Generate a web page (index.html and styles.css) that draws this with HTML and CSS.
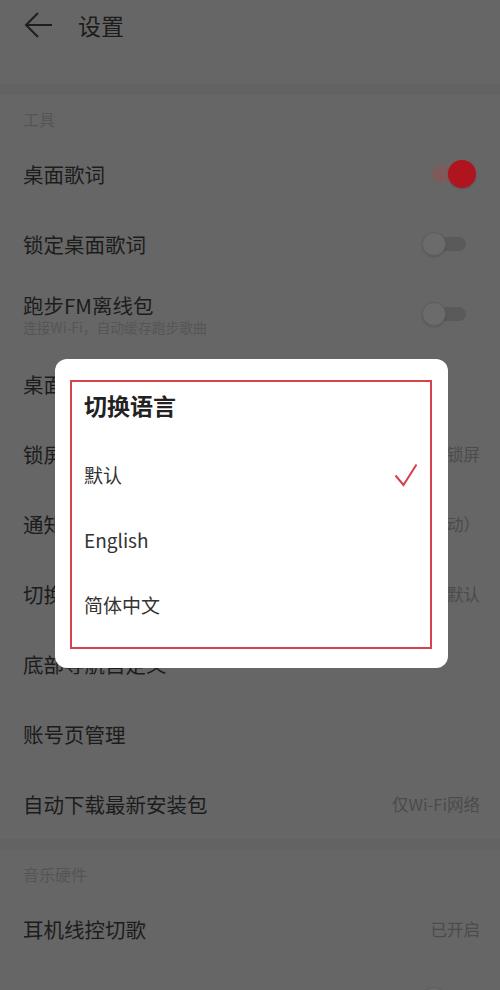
FILE: index.html
```html
<!DOCTYPE html>
<html lang="zh-CN">
<head>
    <meta charset="UTF-8">
    <meta name="viewport" content="width=device-width, initial-scale=1.0">
    <title>设置</title>
    <link rel="stylesheet" href="styles.css">
</head>
<body>
    <div class="page">
        <header class="topbar">
            <svg class="back" width="30" height="26" viewBox="0 0 30 26">
                <path d="M28 13H2M14 1L2 13l12 12" fill="none" stroke="#1e1e1e" stroke-width="2"/>
            </svg>
            <h1>设置</h1>
        </header>

        <div class="band"></div>

        <section>
            <h2 class="section-title">工具</h2>
            <div class="row">
                <span class="label">桌面歌词</span>
                <span class="switch on"><i></i></span>
            </div>
            <div class="row">
                <span class="label">锁定桌面歌词</span>
                <span class="switch"><i></i></span>
            </div>
            <div class="row">
                <div class="label-group">
                    <span class="label">跑步FM离线包</span>
                    <span class="sub">连接Wi-Fi，自动缓存跑步歌曲</span>
                </div>
                <span class="switch"><i></i></span>
            </div>
            <div class="row">
                <span class="label">桌面小部件</span>
            </div>
            <div class="row">
                <span class="label">锁屏显示</span>
                <span class="value">系统锁屏</span>
            </div>
            <div class="row">
                <span class="label">通知栏样式</span>
                <span class="value">系统样式（自动）</span>
            </div>
            <div class="row">
                <span class="label">切换语言</span>
                <span class="value">默认</span>
            </div>
            <div class="row">
                <span class="label">底部导航自定义</span>
            </div>
            <div class="row">
                <span class="label">账号页管理</span>
            </div>
            <div class="row">
                <span class="label">自动下载最新安装包</span>
                <span class="value">仅Wi-Fi网络</span>
            </div>
        </section>

        <div class="band"></div>

        <section>
            <h2 class="section-title">音乐硬件</h2>
            <div class="row">
                <span class="label">耳机线控切歌</span>
                <span class="value">已开启</span>
            </div>
            <div class="row">
                <span class="label">蓝牙设备自动播放</span>
                <span class="switch"><i></i></span>
            </div>
        </section>

        <!-- language dialog -->
        <div class="dialog">
            <div class="dialog-box">
                <h3>切换语言</h3>
                <ul class="options">
                    <li>
                        <span>默认</span>
                        <svg width="24" height="24" viewBox="0 0 24 24">
                            <path d="M1.5 12.5L9.5 22 22.5 1.5" fill="none" stroke="#d4404c" stroke-width="2"/>
                        </svg>
                    </li>
                    <li><span>English</span></li>
                    <li><span>简体中文</span></li>
                </ul>
            </div>
        </div>
    </div>
</body>
</html>
```

FILE: styles.css
```css
body {
    margin: 0;
    background: #666666;
    font-family: "Noto Sans CJK SC", "Noto Sans", sans-serif;
    color: #1c1c1c;
}
.page {
    position: relative;
    width: 500px;
    height: 990px;
    overflow: hidden;
}
.topbar {
    display: flex;
    align-items: center;
    gap: 24px;
    height: 84px;
    box-sizing: border-box;
    padding: 8px 0 42px 24px;
}
.back {
    display: block;
}
.topbar h1 {
    margin: 0;
    font-size: 23px;
    font-weight: 400;
    line-height: 34px;
}
.band {
    height: 11px;
    background: #636363;
}
.section-title {
    margin: 0;
    padding: 13px 23px 9px;
    font-size: 16px;
    font-weight: 400;
    line-height: 22px;
    color: #555555;
}
.row {
    display: flex;
    align-items: center;
    justify-content: space-between;
    height: 70px;
    padding: 0 20px 0 23px;
}
.label {
    font-size: 20.5px;
    line-height: 26px;
}
.label-group {
    display: flex;
    flex-direction: column;
}
.sub {
    font-size: 13.8px;
    line-height: 19px;
    color: #555555;
}
.value {
    font-size: 16.5px;
    color: #4b4b4b;
}
.switch {
    position: relative;
    width: 44px;
    height: 28px;
    margin-right: 14px;
}
.switch::before {
    content: "";
    position: absolute;
    left: 8px;
    right: 0;
    top: 7px;
    height: 14px;
    border-radius: 7px;
    background: #5a5a5a;
}
.switch i {
    position: absolute;
    left: 0;
    top: 2px;
    width: 24px;
    height: 24px;
    box-sizing: border-box;
    border-radius: 50%;
    border: 1px solid #5f5f5f;
    background: #6b6b6b;
    box-shadow: 0 1px 2px rgba(0,0,0,0.15);
}
.switch.on {
    margin-right: 4px;
}
.switch.on::before {
    left: 0;
    right: 8px;
    top: 6px;
    height: 16px;
    border-radius: 8px;
    background: #7e5b5b;
}
.switch.on i {
    left: auto;
    right: 0;
    top: 0;
    width: 28px;
    height: 28px;
    border: none;
    background: #b0141e;
}
.dialog {
    position: absolute;
    left: 55px;
    top: 359px;
    width: 393px;
    height: 309px;
    box-sizing: border-box;
    padding: 21px 16px 19px 15px;
    background: #ffffff;
    border-radius: 12px;
}
.dialog-box {
    height: 100%;
    box-sizing: border-box;
    border: 2px solid #d6434b;
    padding: 8px 12px 0;
}
.dialog-box h3 {
    margin: 0;
    font-size: 23px;
    font-weight: 700;
    line-height: 30px;
    color: #222222;
}
.options {
    list-style: none;
    margin: 22px 0 0;
    padding: 0;
}
.options li {
    display: flex;
    align-items: center;
    justify-content: space-between;
    height: 65px;
    font-size: 19px;
    color: #333333;
}
.options svg {
    display: block;
}
```
